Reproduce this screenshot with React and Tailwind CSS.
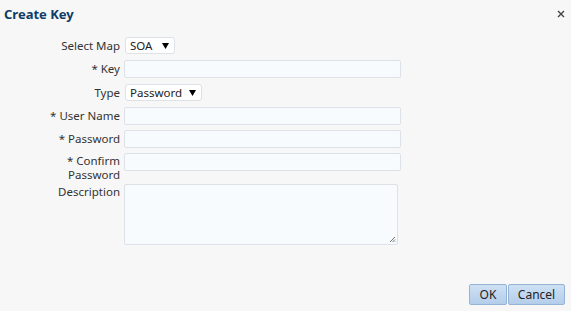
import React from "react";

const font = { fontFamily: '"Noto Sans", "Open Sans", sans-serif' };

function Label({ children }) {
  return (
    <div className="w-[120px] shrink-0 text-right text-[11.5px] leading-[14px] text-[#333]">
      {children}
    </div>
  );
}

function Input({ w = "w-[277px]" }) {
  return (
    <div className={`${w} h-[18px] rounded-[2px] border border-[#dce2e7] bg-[#f8fbfd]`} />
  );
}

function Select({ value, w }) {
  return (
    <div
      className={`${w} h-[17px] ml-[1px] rounded-[3px] border border-[#dce2e7] bg-white flex items-center pl-[4px] text-[11.5px] text-[#222]`}
    >
      <span className="leading-[14px]">{value}</span>
      <svg width="7" height="6" viewBox="0 0 7 6" className="ml-auto mr-[5px] shrink-0">
        <path d="M0 0 H7 L3.5 6 Z" fill="#000" />
      </svg>
    </div>
  );
}

export default function App() {
  return (
    <div className="w-[571px] h-[311px] bg-[#f7f7f7] flex flex-col" style={font}>
      <div className="flex items-center justify-between pl-[4px] pr-[6px] pt-[5px] h-[22px]">
        <div className="text-[13px] font-bold text-[#0d3d66] leading-[16px]">Create Key</div>
        <svg width="8" height="8" viewBox="0 0 8 8">
          <path d="M1 1 L7 7 M7 1 L1 7" stroke="#444" strokeWidth="1.4" />
        </svg>
      </div>

      <div className="flex flex-col mt-[15px]">
        <div className="flex items-center gap-[4px] h-[17px]">
          <Label>Select Map</Label>
          <Select value="SOA" w="w-[50px]" />
        </div>
        <div className="flex items-center gap-[4px] h-[18px] mt-[6px]">
          <Label>* Key</Label>
          <Input />
        </div>
        <div className="flex items-center gap-[4px] h-[17px] mt-[6px]">
          <Label>Type</Label>
          <Select value="Password" w="w-[77px]" />
        </div>
        <div className="flex items-center gap-[4px] h-[18px] mt-[6px]">
          <Label>* User Name</Label>
          <Input />
        </div>
        <div className="flex items-center gap-[4px] h-[18px] mt-[5px]">
          <Label>* Password</Label>
          <Input />
        </div>
        <div className="flex items-start gap-[4px] mt-[5px]">
          <Label>
            <div className="leading-[13px] pt-[1px]">* Confirm</div>
            <div className="leading-[13px] pt-[1px]">Password</div>
          </Label>
          <Input />
        </div>
        <div className="flex items-start gap-[4px] mt-[3px]">
          <div className="pt-[1px]">
            <Label>Description</Label>
          </div>
          <div className="relative w-[274px] h-[61px] rounded-[2px] border border-[#dce2e7] bg-[#f8fbfd]">
            <svg width="7" height="7" viewBox="0 0 7 7" className="absolute right-[1px] bottom-[1px]">
              <path d="M6 1 L1 6 M6 3.5 L3.5 6 M6 5.5 L5.5 6" stroke="#555" strokeWidth="0.8" />
            </svg>
          </div>
        </div>
      </div>

      <div className="flex-1" />

      <div className="flex justify-end gap-[1px] pr-[6px] pb-[6px]">
        <div className="w-[38px] h-[21px] rounded-[2px] border border-[#94b3d6] bg-gradient-to-b from-[#cfe1f4] to-[#b3cdea] flex items-center justify-center text-[12px] text-[#222]">
          OK
        </div>
        <div className="w-[57px] h-[21px] rounded-[2px] border border-[#94b3d6] bg-gradient-to-b from-[#cfe1f4] to-[#b3cdea] flex items-center justify-center text-[12px] text-[#222]">
          Cancel
        </div>
      </div>
    </div>
  );
}
